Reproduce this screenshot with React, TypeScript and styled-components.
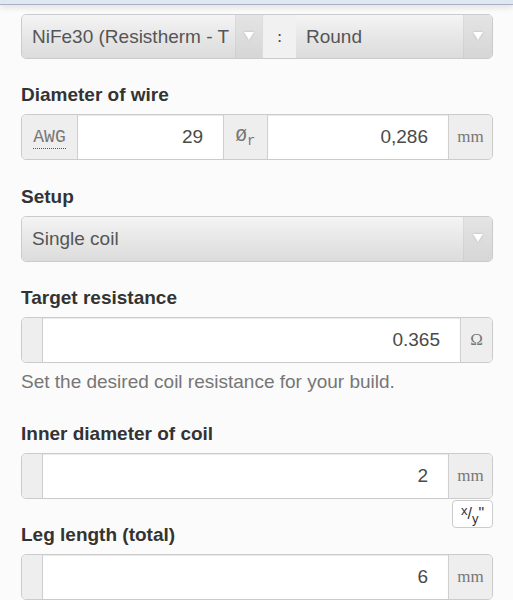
import React from "react";
import styled, { createGlobalStyle } from "styled-components";

const Global = createGlobalStyle`
  html, body { margin: 0; padding: 0; background: #fbfbfb; }
  body { font-family: "Liberation Sans", Arial, Helvetica, sans-serif; overflow: hidden; }
  * { box-sizing: border-box; }
`;

const TopBar = styled.div`
  height: 5px;
  background: #dfe7f3;
  border-bottom: 1px solid #a8b4c6;
  box-shadow: 0 2px 6px rgba(0, 0, 0, 0.14);
`;

const Form = styled.div`
  padding: 9px 20px 0 21px;
  display: flex;
  flex-direction: column;
`;

const Group = styled.div<{ $h?: number }>`
  display: flex;
  height: ${(p) => p.$h ?? 46}px;
  border: 1px solid #cbcbcb;
  border-radius: 5px;
  overflow: hidden;
  background: #eeeeee;
`;

const SelectBox = styled.div<{ $w?: number }>`
  display: flex;
  align-items: center;
  ${(p) => (p.$w ? `width: ${p.$w}px; flex: none;` : `flex: 1; min-width: 0;`)}
  background: linear-gradient(#f4f4f4, #e7e7e7 50%, #dcdcdc);
`;

const SelectText = styled.div`
  flex: 1;
  min-width: 0;
  padding-left: 10px;
  font-size: 19px;
  color: #555;
  white-space: nowrap;
  overflow: hidden;
`;

const ArrowCell = styled.div<{ $w: number }>`
  width: ${(p) => p.$w}px;
  align-self: stretch;
  display: flex;
  align-items: center;
  justify-content: center;
  background: linear-gradient(#e4e4e4, #d6d6d6);
  border-left: 1px solid rgba(0, 0, 0, 0.035);
`;

const Arrow = styled.div`
  width: 0;
  height: 0;
  border-left: 5px solid transparent;
  border-right: 5px solid transparent;
  border-top: 8px solid #ffffff;
  filter: drop-shadow(0 0 1px rgba(0, 0, 0, 0.18));
  margin-top: -2px;
`;

const Addon = styled.div<{ $w: number; $mono?: boolean; $light?: boolean }>`
  width: ${(p) => p.$w}px;
  flex: none;
  display: flex;
  align-items: center;
  justify-content: center;
  background: ${(p) => (p.$light ? "#f1f1f1" : "#eeeeee")};
  color: ${(p) => (p.$light ? "#444" : "#777")};
  font-family: ${(p) =>
    p.$mono
      ? `"Liberation Mono", "Courier New", monospace`
      : `"Liberation Serif", "Times New Roman", serif`};
  font-size: ${(p) => (p.$mono ? 18 : 17)}px;
  border-left: 1px solid ${(p) => (p.$light ? "#dcdcdc" : "#cfcfcf")};
  &:first-child {
    border-left: none;
  }
`;

const Abbr = styled.span`
  border-bottom: 1px dotted #555;
  padding-bottom: 2px;
  margin-top: 2px;
  line-height: 18px;
`;

const Diam = styled.span`
  line-height: 1;
  font-size: 19px;
  sub {
    font-size: 14px;
    vertical-align: -4px;
  }
`;

const Input = styled.div<{ $f?: number }>`
  flex: ${(p) => p.$f ?? 1};
  min-width: 0;
  display: flex;
  align-items: center;
  justify-content: flex-end;
  padding-right: 20px;
  background: #fff;
  border-left: 1px solid #cfcfcf;
  box-shadow: inset 0 1px 1px rgba(0, 0, 0, 0.09);
  font-size: 19px;
  color: #4a4a4a;
`;

const Label = styled.div<{ $mt?: number }>`
  margin-top: ${(p) => p.$mt ?? 25}px;
  margin-bottom: 8px;
  font-size: 19px;
  line-height: 22px;
  font-weight: bold;
  color: #333;
`;

const Help = styled.div`
  margin-top: 8px;
  font-size: 19px;
  line-height: 22px;
  color: #767676;
`;

const ButtonRow = styled.div`
  display: flex;
  justify-content: flex-end;
  margin-top: 1px;
`;

const UnitButton = styled.div`
  width: 41px;
  height: 28px;
  border: 1px solid #cccccc;
  border-radius: 4px;
  background: #fff;
  display: flex;
  align-items: center;
  justify-content: center;
  color: #333;
`;

const UnitText = styled.span`
  font-size: 16px;
  line-height: 1;
  sup, sub { font-size: 13px; line-height: 0; }
  sup { vertical-align: 4px; }
  sub { vertical-align: -4px; }
`;

export default function App() {
  return (
    <>
      <Global />
      <TopBar />
      <Form>
        <Group $h={45}>
          <SelectBox $w={240}>
            <SelectText>NiFe30 (Resistherm - T</SelectText>
            <ArrowCell $w={27}>
              <Arrow />
            </ArrowCell>
          </SelectBox>
          <Addon $w={34} $light>:</Addon>
          <SelectBox>
            <SelectText>Round</SelectText>
            <ArrowCell $w={29}>
              <Arrow />
            </ArrowCell>
          </SelectBox>
        </Group>

        <Label>Diameter of wire</Label>
        <Group>
          <Addon $w={55} $mono>
            <Abbr>AWG</Abbr>
          </Addon>
          <Input $f={143}>29</Input>
          <Addon $w={44} $mono>
            <Diam>
              Ø<sub>r</sub>
            </Diam>
          </Addon>
          <Input $f={183}>0,286</Input>
          <Addon $w={44}>mm</Addon>
        </Group>

        <Label $mt={26}>Setup</Label>
        <Group>
          <SelectBox>
            <SelectText>Single coil</SelectText>
            <ArrowCell $w={29}>
              <Arrow />
            </ArrowCell>
          </SelectBox>
        </Group>

        <Label>Target resistance</Label>
        <Group>
          <Addon $w={20} />
          <Input>0.365</Input>
          <Addon $w={32}>Ω</Addon>
        </Group>
        <Help>Set the desired coil resistance for your build.</Help>

        <Label $mt={30}>Inner diameter of coil</Label>
        <Group>
          <Addon $w={20} />
          <Input>2</Input>
          <Addon $w={44}>mm</Addon>
        </Group>
        <ButtonRow>
          <UnitButton>
            <UnitText>
              <sup>x</sup>/<sub>y</sub>"
            </UnitText>
          </UnitButton>
        </ButtonRow>

        <Label $mt={-4}>Leg length (total)</Label>
        <Group>
          <Addon $w={20} />
          <Input>6</Input>
          <Addon $w={44}>mm</Addon>
        </Group>
      </Form>
    </>
  );
}
